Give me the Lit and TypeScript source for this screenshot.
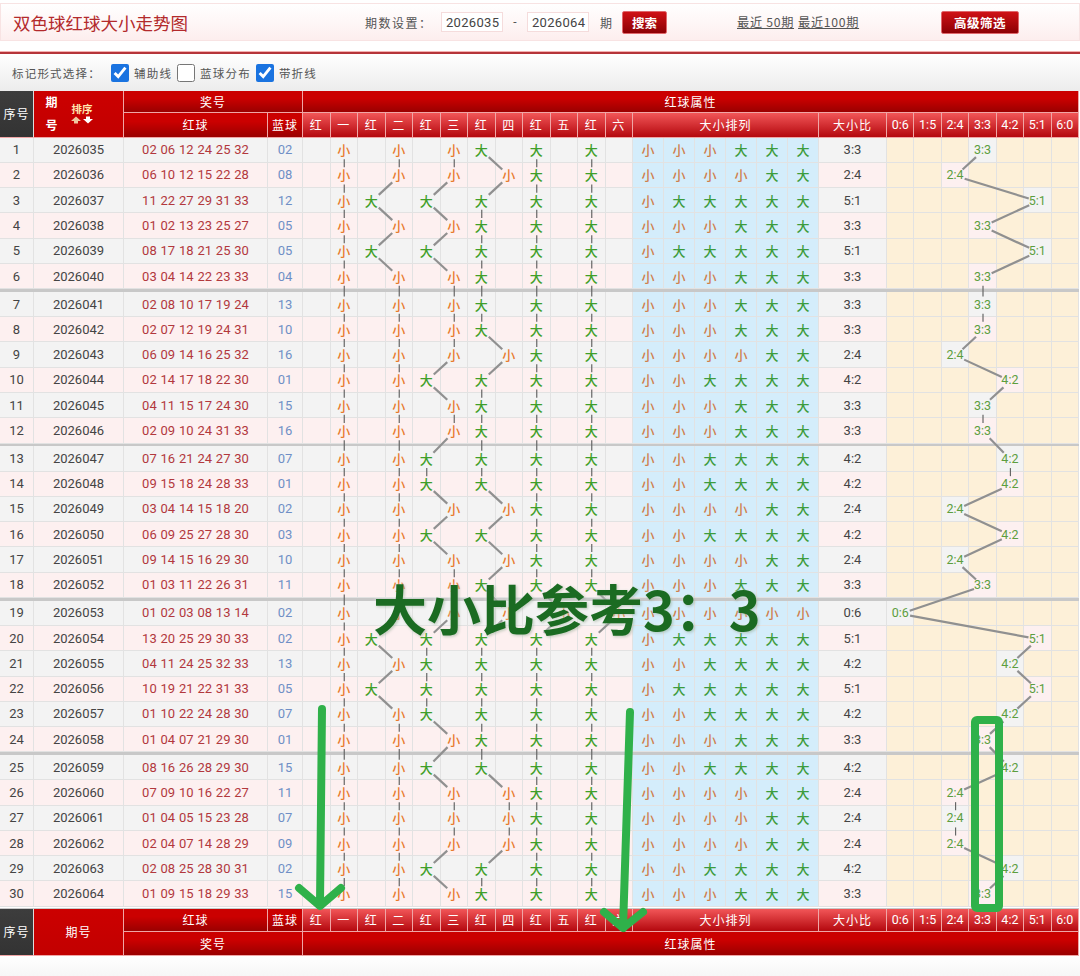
import { LitElement, html, svg, css, TemplateResult } from 'lit';
import { customElement } from 'lit/decorators.js';

const RAW = `2026035 02 06 12 24 25 32 02
2026036 06 10 12 15 22 28 08
2026037 11 22 27 29 31 33 12
2026038 01 02 13 23 25 27 05
2026039 08 17 18 21 25 30 05
2026040 03 04 14 22 23 33 04
2026041 02 08 10 17 19 24 13
2026042 02 07 12 19 24 31 10
2026043 06 09 14 16 25 32 16
2026044 02 14 17 18 22 30 01
2026045 04 11 15 17 24 30 15
2026046 02 09 10 24 31 33 16
2026047 07 16 21 24 27 30 07
2026048 09 15 18 24 28 33 01
2026049 03 04 14 15 18 20 02
2026050 06 09 25 27 28 30 03
2026051 09 14 15 16 29 30 10
2026052 01 03 11 22 26 31 11
2026053 01 02 03 08 13 14 02
2026054 13 20 25 29 30 33 02
2026055 04 11 24 25 32 33 13
2026056 10 19 21 22 31 33 05
2026057 01 10 22 24 28 30 07
2026058 01 04 07 21 29 30 01
2026059 08 16 26 28 29 30 15
2026060 07 09 10 16 22 27 11
2026061 01 04 05 15 23 28 07
2026062 02 04 07 14 28 29 09
2026063 02 08 25 28 30 31 02
2026064 01 09 15 18 29 33 15`;

interface Draw {
  no: number;
  period: string;
  reds: string[];
  blue: string;
  bigs: boolean[];
  bigCount: number;
}

const DRAWS: Draw[] = RAW.split('\n').map((line, index) => {
  const parts = line.trim().split(' ');
  const reds = parts.slice(1, 7);
  const bigs = reds.map((red) => Number(red) >= 17);
  return {
    no: index + 1,
    period: parts[0],
    reds,
    blue: parts[7],
    bigs,
    bigCount: bigs.filter(Boolean).length,
  };
});

const BALL_HEADS = ['红', '一', '红', '二', '红', '三', '红', '四', '红', '五', '红', '六'];
const RATIOS = ['0:6', '1:5', '2:4', '3:3', '4:2', '5:1', '6:0'];

const ROW_H = 25.3;
const SEP_H = 2.6;
const BALL_W = 27.5;
const BALL_X = 303;
const RATIO_W = 27.43;
const RATIO_X = 887;

const rowCenter = (i: number): number => i * ROW_H + Math.floor(i / 6) * SEP_H + ROW_H / 2;
const bodyHeight = DRAWS.length * ROW_H + 4 * SEP_H;

function segment(x1: number, y1: number, x2: number, y2: number) {
  const dx = x2 - x1;
  const dy = y2 - y1;
  const length = Math.hypot(dx, dy);
  const straight = dx === 0;
  const trim = straight ? 8.6 : 9.5;
  const a = trim / length;
  return svg`<line
    class=${straight ? 'dash' : 'diag'}
    x1=${x1 + dx * a}
    y1=${y1 + dy * a}
    x2=${x2 - dx * a}
    y2=${y2 - dy * a}
  ></line>`;
}

function trackLines(xOf: (d: Draw) => number) {
  return DRAWS.slice(1).map((draw, i) =>
    segment(xOf(DRAWS[i]), rowCenter(i), xOf(draw), rowCenter(i + 1))
  );
}

@customElement('app-root')
export class AppRoot extends LitElement {
  static styles = css`
    :host {
      display: block;
      width: 1080px;
      height: 976px;
      overflow: hidden;
      position: relative;
      background: #fff;
      font-family: 'Noto Sans CJK SC', 'Noto Sans', sans-serif;
      color: #555;
      --cols: 34px 90px 144px 35px repeat(12, 27.5px) repeat(6, 31px) 68px repeat(7, 27.43px);
    }

    .top-bar {
      box-sizing: border-box;
      margin-top: 3px;
      height: 38px;
      display: flex;
      align-items: center;
      border: 1px solid #f8e3e3;
      background: linear-gradient(#ffffff, #fdeeee);
      font-size: 12px;
    }
    .title {
      width: 364px;
      padding-left: 12px;
      box-sizing: border-box;
      font-size: 17.5px;
      color: #b32a2c;
      white-space: nowrap;
    }
    .field-label {
      width: 76px;
      letter-spacing: 1.5px;
      white-space: nowrap;
    }
    .top-bar input {
      box-sizing: border-box;
      width: 62px;
      height: 20px;
      padding: 0 0 0 4px;
      margin: 0;
      border: 1px solid #f5dcdc;
      background: #fff;
      color: #444;
      font: 13px Roboto, sans-serif;
      letter-spacing: 0.3px;
    }
    .dash-sep {
      width: 24px;
      text-align: center;
      font-family: Roboto, sans-serif;
    }
    .unit {
      width: 33px;
      padding-left: 11px;
      box-sizing: border-box;
    }
    .btn {
      box-sizing: border-box;
      height: 23px;
      border: 1px solid #e0686c;
      border-radius: 2px;
      background: linear-gradient(#cf1216, #8c0004);
      color: #fff;
      font-size: 12.5px;
      font-weight: 700;
      line-height: 21px;
      text-align: center;
      white-space: nowrap;
    }
    .btn.search {
      width: 45px;
    }
    .btn.filter {
      width: 78px;
      margin-left: 81px;
      letter-spacing: 0.5px;
    }
    .links {
      display: flex;
      gap: 4px;
      margin-left: 70px;
      width: 123px;
      white-space: nowrap;
      font-size: 12px;
    }
    .links a {
      color: #555;
      text-decoration: underline;
      font-size: 12.2px;
      letter-spacing: 0.7px;
    }

    .rule {
      margin-top: 10px;
      height: 2px;
      border-top: 1px solid #f4b0b0;
      background: #b5343a;
    }

    .options {
      box-sizing: border-box;
      height: 37px;
      display: flex;
      align-items: center;
      padding-left: 12px;
      background: linear-gradient(#ffffff, #ececec);
      font-size: 11.5px;
      letter-spacing: 1.2px;
      color: #555;
    }
    .options .lead {
      width: 99px;
      white-space: nowrap;
    }
    .options label {
      display: flex;
      align-items: center;
      gap: 5px;
      margin-right: 5px;
      white-space: nowrap;
    }
    .options input {
      width: 18px;
      height: 18px;
      margin: 0;
      accent-color: #1a73e0;
    }

    .grid {
      display: grid;
      grid-template-columns: var(--cols);
      width: 1079px;
    }
    .head {
      grid-template-rows: 22px 24.5px;
      color: #fff;
      font-size: 12px;
    }
    .foot {
      grid-template-rows: 23px 24px;
      color: #fff;
      font-size: 12px;
      margin-top: 1px;
      border-top: 1.5px solid #c8c8c8;
    }
    .hc {
      box-sizing: border-box;
      display: flex;
      align-items: center;
      justify-content: center;
      border-right: 1px solid #f0a6a6;
      border-bottom: 1px solid #f0a6a6;
      letter-spacing: 1px;
      white-space: nowrap;
      min-width: 0;
    }
    .hc.dark {
      background: linear-gradient(#cb0000 35%, #9a0000);
    }
    .hc.light {
      background: linear-gradient(#f25658, #b4080e);
    }
    .hc.plain {
      background: linear-gradient(#cc0000, #c20000);
    }
    .hc.slate {
      background: linear-gradient(#3d3d3d, #333);
      border-right-color: #ddd;
    }
    .hc.num {
      font: 12.5px Roboto, sans-serif;
      letter-spacing: 0;
    }
    .span2 {
      grid-row: span 2;
    }
    .period-head {
      display: grid;
      grid-template-columns: 36px 24px;
      justify-content: start;
    }
    .period-head .stack {
      display: flex;
      flex-direction: column;
      align-items: center;
      gap: 9px;
      font-weight: 700;
      line-height: 14px;
    }
    .period-head .sort {
      display: flex;
      flex-direction: column;
      align-items: center;
      font-size: 10.5px;
      letter-spacing: 0;
      font-weight: 700;
      color: #ffe6b0;
      line-height: 12px;
    }
    .period-head svg {
      display: block;
      width: 24px;
      height: 8px;
      margin-top: 1px;
    }
    .wide-1 {
      grid-column: 3 / 5;
    }
    .wide-2 {
      grid-column: 5 / -1;
    }
    .six {
      grid-column: span 6;
    }

    .body {
      position: relative;
      background: #c8c8c8;
      width: 1079px;
    }
    .row {
      grid-template-rows: 25.3px;
      height: 25.3px;
      font: 13px Roboto, sans-serif;
      color: #444;
    }
    .row.gap {
      margin-top: 2.6px;
    }
    .row.odd {
      background: #f3f3f3;
    }
    .row.even {
      background: #fdf0f0;
    }
    .c {
      box-sizing: border-box;
      display: flex;
      align-items: center;
      justify-content: center;
      border-right: 1px solid #e2e2e2;
      border-bottom: 1px solid #e2e2e2;
      min-width: 0;
      white-space: nowrap;
    }
    .reds {
      color: #b2383d;
      word-spacing: 0.6px;
    }
    .blue {
      color: #6f8fc6;
    }
    .mark {
      font: 500 13px 'Noto Sans CJK SC', sans-serif;
    }
    .mark.small {
      color: #e87a2c;
    }
    .mark.big {
      color: #3f9f2a;
    }
    .c.attr {
      background: #d4edfb;
    }
    .c.attr .mark.small {
      color: #cf7e4c;
    }
    .c.attr .mark.big {
      color: #3d9c3d;
    }
    .c.rate {
      background: #fdf0d8;
    }
    .c.rate.hit {
      background: transparent;
      color: #5c9e3e;
      font-size: 12.5px;
    }

    .lines {
      position: absolute;
      left: 0;
      top: 0;
      pointer-events: none;
    }
    .lines line.diag {
      stroke: #909090;
      stroke-width: 2.2;
    }
    .lines line.dash {
      stroke: #666;
      stroke-width: 1.2;
    }

    .bottom {
      height: 21px;
      background: linear-gradient(#ffffff, #f6f6f6);
    }

    .note {
      position: absolute;
      left: 373px;
      top: 572px;
      font-size: 54px;
      font-weight: 700;
      line-height: 72px;
      color: #1b6b22;
      white-space: nowrap;
      text-shadow: 0 0 4px rgba(255, 255, 255, 0.7), 1px 1px 3px rgba(0, 60, 0, 0.35);
      pointer-events: none;
    }
    .marks {
      position: absolute;
      left: 0;
      top: 0;
      pointer-events: none;
    }
    .marks path,
    .marks rect {
      fill: none;
      stroke: #2fb14a;
      stroke-width: 8;
      stroke-linecap: round;
      stroke-linejoin: round;
    }
    .marks rect {
      stroke-linecap: butt;
    }
  `;

  private renderBallHeads(): TemplateResult[] {
    return BALL_HEADS.map((label) => html`<div class="hc light">${label}</div>`);
  }

  private renderRatioHeads(): TemplateResult[] {
    return RATIOS.map((label) => html`<div class="hc light num">${label}</div>`);
  }

  private renderHead(): TemplateResult {
    return html`
      <div class="grid head">
        <div class="hc slate span2">序号</div>
        <div class="hc plain span2 period-head">
          <div class="stack"><span>期</span><span>号</span></div>
          <div class="sort">
            <span>排序</span>
            <svg viewBox="0 0 24 8">
              <path d="M6 0.5 L11 5 H8 V7.5 H4 V5 H1 Z" fill="#f0c8a0"></path>
              <path d="M18 7.5 L23 3 H20 V0.5 H16 V3 H13 Z" fill="#fff"></path>
            </svg>
          </div>
        </div>
        <div class="hc dark wide-1">奖号</div>
        <div class="hc dark wide-2">红球属性</div>
        <div class="hc dark">红球</div>
        <div class="hc dark">蓝球</div>
        ${this.renderBallHeads()}
        <div class="hc light six">大小排列</div>
        <div class="hc light">大小比</div>
        ${this.renderRatioHeads()}
      </div>
    `;
  }

  private renderFoot(): TemplateResult {
    return html`
      <div class="grid foot">
        <div class="hc slate span2">序号</div>
        <div class="hc plain span2">期号</div>
        <div class="hc dark">红球</div>
        <div class="hc dark">蓝球</div>
        ${this.renderBallHeads()}
        <div class="hc light six">大小排列</div>
        <div class="hc light">大小比</div>
        ${this.renderRatioHeads()}
        <div class="hc dark wide-1">奖号</div>
        <div class="hc dark wide-2">红球属性</div>
      </div>
    `;
  }

  private renderRow(draw: Draw, index: number): TemplateResult {
    const ballCells = [];
    for (let ball = 0; ball < 6; ball++) {
      const big = draw.bigs[ball];
      ballCells.push(html`<div class="c">${big ? html`<span class="mark big">大</span>` : ''}</div>`);
      ballCells.push(html`<div class="c">${big ? '' : html`<span class="mark small">小</span>`}</div>`);
    }
    const smallCount = 6 - draw.bigCount;
    const rowClass = `grid row ${index % 2 ? 'even' : 'odd'} ${index && index % 6 === 0 ? 'gap' : ''}`;

    return html`
      <div class=${rowClass}>
        <div class="c">${draw.no}</div>
        <div class="c">${draw.period}</div>
        <div class="c reds">${draw.reds.join(' ')}</div>
        <div class="c blue">${draw.blue}</div>
        ${ballCells}
        ${[0, 1, 2, 3, 4, 5].map((i) =>
          i < smallCount
            ? html`<div class="c attr"><span class="mark small">小</span></div>`
            : html`<div class="c attr"><span class="mark big">大</span></div>`
        )}
        <div class="c">${draw.bigCount}:${smallCount}</div>
        ${RATIOS.map((label, i) =>
          i === draw.bigCount
            ? html`<div class="c rate hit">${label}</div>`
            : html`<div class="c rate"></div>`
        )}
      </div>
    `;
  }

  private renderLines(): TemplateResult {
    const tracks = [0, 1, 2, 3, 4, 5].map((ball) =>
      trackLines((d) => BALL_X + (ball * 2 + (d.bigs[ball] ? 0 : 1) + 0.5) * BALL_W)
    );
    const ratio = trackLines((d) => RATIO_X + (d.bigCount + 0.5) * RATIO_W);
    return html`
      <svg class="lines" width="1079" height=${bodyHeight} viewBox="0 0 1079 ${bodyHeight}">
        ${tracks}${ratio}
      </svg>
    `;
  }

  render(): TemplateResult {
    return html`
      <div class="top-bar">
        <div class="title">双色球红球大小走势图</div>
        <div class="field-label">期数设置：</div>
        <input value="2026035" />
        <div class="dash-sep">-</div>
        <input value="2026064" />
        <div class="unit">期</div>
        <div class="btn search">搜索</div>
        <div class="links"><a>最近 50期</a><a>最近100期</a></div>
        <div class="btn filter">高级筛选</div>
      </div>
      <div class="rule"></div>
      <div class="options">
        <div class="lead">标记形式选择：</div>
        <label><input type="checkbox" checked />辅助线</label>
        <label><input type="checkbox" />蓝球分布</label>
        <label><input type="checkbox" checked />带折线</label>
      </div>
      ${this.renderHead()}
      <div class="body">
        ${DRAWS.map((draw, i) => this.renderRow(draw, i))}
        ${this.renderLines()}
      </div>
      ${this.renderFoot()}
      <div class="bottom"></div>

      <div class="note">大小比参考3：3</div>
      <svg class="marks" width="1080" height="976" viewBox="0 0 1080 976">
        <path d="M322 709 L320 904 M299 888 L320 906 L341 888"></path>
        <path d="M630 712 L623 928 M604 912 L623 928 L643 912"></path>
        <rect x="975" y="720" width="24" height="188" rx="2"></rect>
      </svg>
    `;
  }
}
